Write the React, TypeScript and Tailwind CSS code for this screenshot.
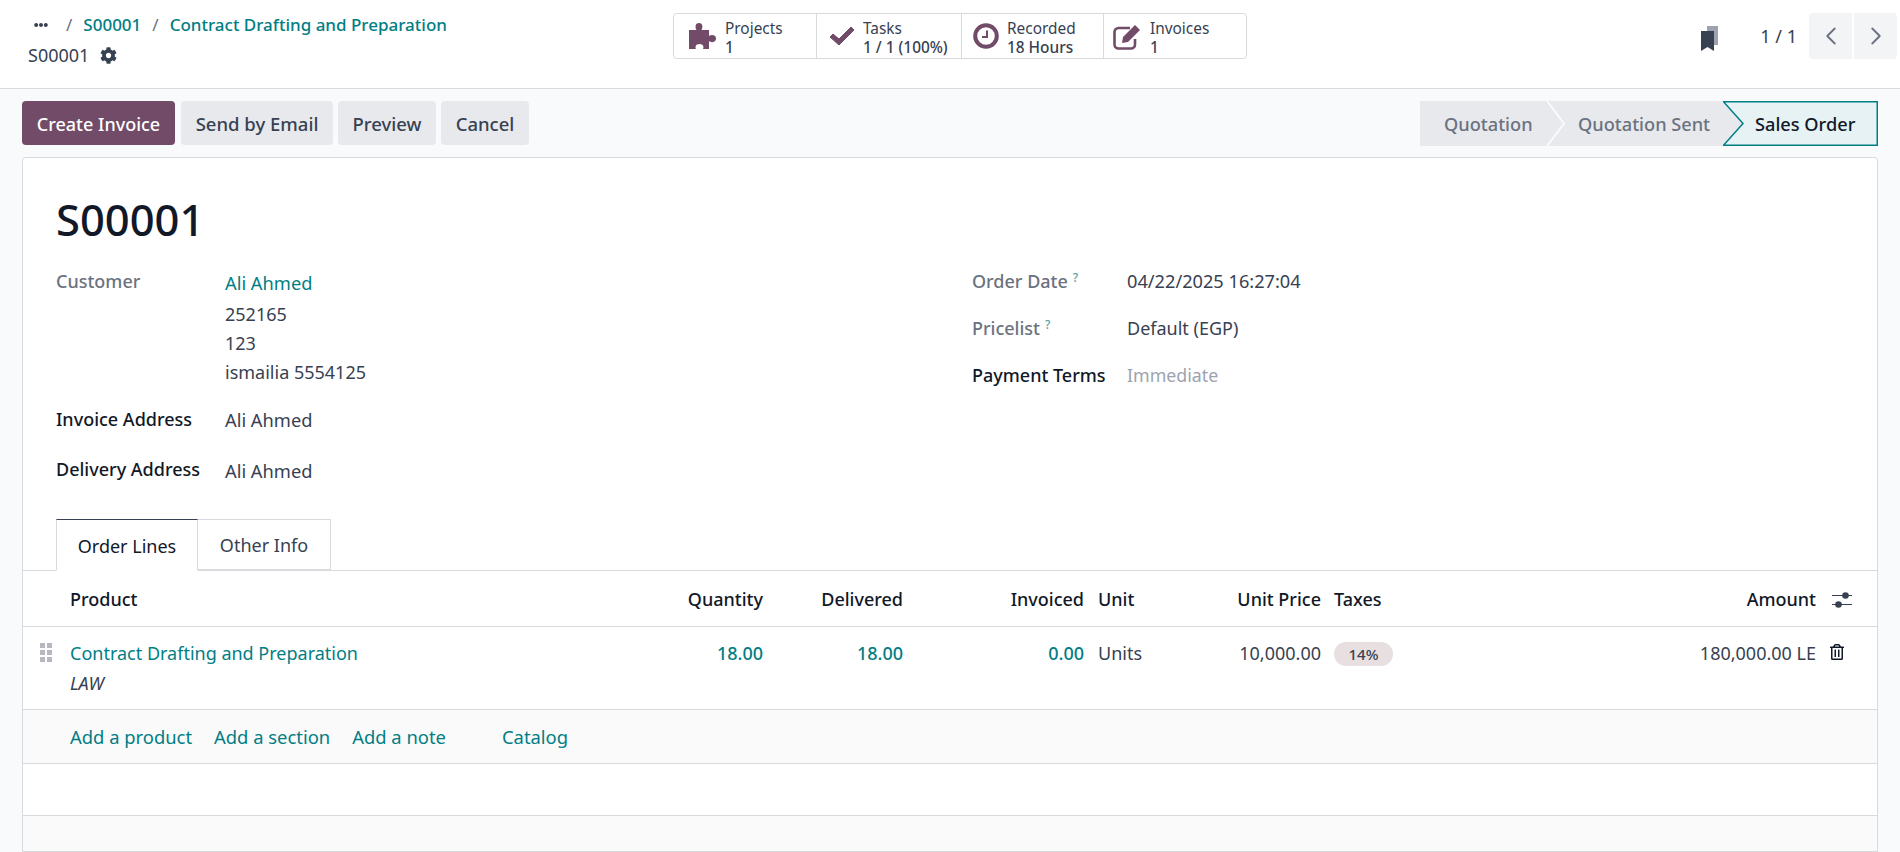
import { FaCog, FaEllipsisH, FaRegTrashAlt } from "react-icons/fa";
import { LuChevronLeft, LuChevronRight } from "react-icons/lu";
import type { ReactNode } from "react";

function StatButton({ icon, label, value, className, iconClass }: { icon: ReactNode; label: string; value: string; className: string; iconClass: string }) {
  return (
    <div className={`flex items-center h-full ${className}`}>
      <div className={`shrink-0 flex text-[#714b67] ${iconClass}`}>{icon}</div>
      <div className="flex flex-col pt-[4px] text-[15.4px] leading-[19px] text-[#374151]">
        <span>{label}</span>
        <span className="font-medium">{value}</span>
      </div>
    </div>
  );
}

function Field({ label, strong, help, children, className }: { label: string; strong?: boolean; help?: boolean; children: ReactNode; className?: string }) {
  return (
    <div className={`flex ${className ?? ""}`}>
      <div className={`w-[169px] shrink-0 font-medium ${strong ? "text-[#111827]" : "text-[#6b7280]"}`}>
        {label}
        {help && <sup className="ml-[5px] text-[12px] text-[#017e84] opacity-70">?</sup>}
      </div>
      <div className="text-[#374151]">{children}</div>
    </div>
  );
}

const grid = "grid grid-cols-[47px_500px_193px_140px_181px_150px_87px_200px_295px_1fr]";

export default function App() {
  return (
    <div className="h-[852px] w-[1900px] overflow-hidden flex flex-col bg-[#f9fafb] text-[18px] text-[#374151] font-['Noto_Sans','Open_Sans',sans-serif]">
      {/* control panel */}
      <header className="relative h-[89px] shrink-0 bg-white border-b border-[#d8dadd] flex justify-between">
        <div className="pl-[28px] pt-[12px]">
          <div className="flex items-center h-[26px] text-[17px] font-medium text-[#017e84]">
            <FaEllipsisH className="ml-[6px] text-[14px] text-[#374151]" />
            <span className="ml-[18px] mr-[11px] text-[#6b7280] font-normal">/</span>
            <span>S00001</span>
            <span className="mx-[11px] text-[#6b7280] font-normal">/</span>
            <span>Contract Drafting and Preparation</span>
          </div>
          <div className="flex items-center h-[34px] text-[#374151]">
            <span>S00001</span>
            <FaCog className="ml-[11px] text-[17px]" />
          </div>
        </div>
        <div className="absolute left-[673px] top-[13px] h-[46px] w-[574px] flex rounded-[4px] border border-[#d8dadd] divide-x divide-[#d8dadd]">
          <StatButton
            className="w-[143px]"
            iconClass="w-[51px] pl-[15px]"
            label="Projects"
            value="1"
            icon={
              <svg width="28" height="26" viewBox="0 0 28 26" fill="currentColor">
                <path d="M0 7h7.500C6 4.500 6 0 10 0s4 4.500 2.500 7H20v6c2-1.500 7-1.500 7 2.500S22 20 20 18v8h-6c1-2 .5-5-3.500-5S6 24 7 26H0z" />
              </svg>
            }
          />
          <StatButton
            className="w-[145px]"
            iconClass="w-[46px] pl-[12px]"
            label="Tasks"
            value="1 / 1 (100%)"
            icon={
              <svg width="26" height="20" viewBox="0 0 26 20" fill="currentColor" stroke="currentColor" strokeLinejoin="round">
                <path d="M1 11l3-3 6 5L22 1l3 3-15 15z" />
              </svg>
            }
          />
          <StatButton
            className="w-[142px]"
            iconClass="w-[45px] pl-[11px]"
            label="Recorded"
            value="18 Hours"
            icon={
              <svg width="26" height="26" viewBox="0 0 26 26" fill="none" stroke="currentColor">
                <circle cx="13" cy="13" r="10.800" strokeWidth="4" />
                <path d="M14 7.500v6.500H9" strokeWidth="2" />
              </svg>
            }
          />
          <StatButton
            className="flex-1"
            iconClass="w-[46px] pl-[9px]"
            label="Invoices"
            value="1"
            icon={
              <svg width="29" height="27" viewBox="0 0 29 27">
                <path d="M22 16v5.500a4 4 0 0 1-4 4H5.500a4 4 0 0 1-4-4V9a4 4 0 0 1 4-4H17" fill="none" stroke="currentColor" strokeWidth="2.600" />
                <path d="M9 20l1-6L22 2l5 5-12 12z" fill="currentColor" />
              </svg>
            }
          />
        </div>
        <div className="flex items-start pt-[13px] pr-[3px]">
          <svg width="18" height="26" viewBox="0 0 18 26" className="mt-[13px]">
            <path d="M6 0h11v19h-11z" fill="#9ca3af" />
            <path d="M0 5h13v20l-6.500-4-6.500 4z" fill="#374151" />
          </svg>
          <span className="ml-[41px] mr-[12px] h-[46px] flex items-center">1 / 1</span>
          <div className="flex gap-[2px]">
            <div className="w-[43px] h-[46px] rounded-l-[4px] bg-[#f3f4f6] flex items-center justify-center">
              <LuChevronLeft className="text-[30px] text-[#6b7280]" strokeWidth={1.5} />
            </div>
            <div className="w-[43px] h-[46px] rounded-r-[4px] bg-[#f3f4f6] flex items-center justify-center">
              <LuChevronRight className="text-[30px] text-[#6b7280]" strokeWidth={1.5} />
            </div>
          </div>
        </div>
      </header>

      {/* action bar */}
      <div className="h-[68px] shrink-0 flex items-start justify-between pl-[22px] pr-[22px] pt-[12px] font-medium">
        <div className="flex gap-[5px] h-[44px]">
          <button className="w-[153px] pt-[2px] rounded-[4px] bg-[#714b67] text-white">Create Invoice</button>
          <button className="ml-[1px] w-[152px] pt-[2px] rounded-[4px] bg-[#e7e9ed] text-[18.500px]">Send by Email</button>
          <button className="w-[98px] pt-[2px] rounded-[4px] bg-[#e7e9ed] text-[18.500px]">Preview</button>
          <button className="w-[88px] pt-[2px] rounded-[4px] bg-[#e7e9ed] text-[18.500px]">Cancel</button>
        </div>
        <div className="flex h-[45px] text-[18.200px]">
          <div className="relative w-[128px] pt-[2px] bg-[#e7e9ed] text-[#6b7280] flex items-center pl-[24px]">
            Quotation
            <svg width="20" height="45" viewBox="0 0 20 45" className="absolute -right-[18px] top-0 z-10">
              <path d="M1 0l17 22.500L1 45" fill="none" stroke="#f9fafb" strokeWidth="2" />
            </svg>
          </div>
          <div className="w-[175px] pt-[2px] bg-[#e7e9ed] text-[#6b7280] flex items-center pl-[30px]">Quotation Sent</div>
          <div className="relative w-[155px] pt-[2px] bg-[#e7e9ed] flex items-center pl-[32px] text-[#111827]">
            <svg width="155" height="45" viewBox="0 0 155 45" className="absolute inset-0">
              <path d="M0.500 0.750H154.250V44.250H0.500L20 22.500Z" fill="#e6f2f3" stroke="#017e84" strokeWidth="1.500" />
            </svg>
            <span className="relative">Sales Order</span>
          </div>
        </div>
      </div>

      {/* sheet */}
      <main className="mx-[22px] flex-1 bg-white border border-[#d8dadd] rounded-t-[4px] flex flex-col">
        <div className="pl-[33px] pt-[31px] h-[361px] shrink-0">
          <h1 className="text-[43.500px] leading-[60px] font-medium text-[#111827]">S00001</h1>
          <div className="flex mt-[20px]">
            <div className="w-[916px]">
              <Field label="Customer" className="leading-[24px]">
                <div className="text-[#017e84] text-[18.300px] leading-[26px] mt-[1px]">Ali Ahmed</div>
                <div className="leading-[29px] mt-[4px]">252165</div>
                <div className="leading-[29px]">123</div>
                <div className="leading-[29px]">ismailia 5554125</div>
              </Field>
              <Field label="Invoice Address" strong className="leading-[24px] mt-[20px]">
                <div className="mt-[1px] text-[18.300px]">Ali Ahmed</div>
              </Field>
              <Field label="Delivery Address" strong className="leading-[24px] mt-[25px]">
                <div className="mt-[2px] text-[18.300px]">Ali Ahmed</div>
              </Field>
            </div>
            <div className="flex flex-col gap-[23px] leading-[24px]">
              <Field label="Order Date" help className="w-[500px] [&>div:first-child]:w-[155px]">
                <span className="text-[18.200px]">04/22/2025 16:27:04</span>
              </Field>
              <Field label="Pricelist" help className="w-[500px] [&>div:first-child]:w-[155px]">Default (EGP)</Field>
              <Field label="Payment Terms" strong className="w-[500px] [&>div:first-child]:w-[155px]">
                <span className="text-[#9ca3af] text-[17.800px]">Immediate</span>
              </Field>
            </div>
          </div>
        </div>

        {/* tabs */}
        <div className="flex pl-[33px] h-[52px] shrink-0 border-b border-[#d8dadd] relative">
          <div className="w-[142px] h-[52px] pt-[2px] bg-white border border-[#d8dadd] border-t-[#374151] border-b-white text-[#111827] flex items-center justify-center">Order Lines</div>
          <div className="w-[133px] h-[51px] pt-[2px] border border-l-0 border-[#d8dadd] flex items-center justify-center">Other Info</div>
        </div>

        {/* order lines */}
        <div className={`${grid} h-[56px] shrink-0 items-center pt-[2px] border-b border-[#d8dadd] font-medium text-[#111827]`}>
          <div />
          <div>Product</div>
          <div className="text-right">Quantity</div>
          <div className="text-right">Delivered</div>
          <div className="text-right">Invoiced</div>
          <div className="pl-[14px]">Unit</div>
          <div className="text-right">Unit Price</div>
          <div className="pl-[13px]">Taxes</div>
          <div className="text-right">Amount</div>
          <div className="pl-[16px]">
            <svg width="20" height="16" viewBox="0 0 20 16" className="text-[#374151]">
              <path d="M0 3.500h20M0 12.500h20" stroke="currentColor" strokeWidth="1.200" />
              <circle cx="13.500" cy="3.500" r="3.300" fill="currentColor" />
              <circle cx="6.500" cy="12.500" r="3.300" fill="currentColor" />
            </svg>
          </div>
        </div>
        <div className={`${grid} h-[83px] shrink-0 border-b border-[#d8dadd] pt-[13px]`}>
          <div className="pl-[17px] pt-[2px]">
            <div className="grid grid-cols-2 w-[12px] gap-y-[2px] gap-x-[2px] mt-[1px]">
              {[0, 1, 2, 3, 4, 5].map((i) => (
                <span key={i} className="w-[5px] h-[5px] bg-[#b5b8be]" />
              ))}
            </div>
          </div>
          <div>
            <div className="text-[#017e84] leading-[26px]">Contract Drafting and Preparation</div>
            <div className="italic leading-[26px] mt-[4px]">LAW</div>
          </div>
          <div className="text-right font-medium text-[#017e84] leading-[26px]">18.00</div>
          <div className="text-right font-medium text-[#017e84] leading-[26px]">18.00</div>
          <div className="text-right font-medium text-[#017e84] leading-[26px]">0.00</div>
          <div className="pl-[14px] leading-[26px]">Units</div>
          <div className="text-right leading-[26px]">10,000.00</div>
          <div className="pl-[13px]">
            <span className="inline-flex items-center justify-center w-[59px] h-[24px] rounded-full bg-[#e7dfe0] text-[15px] font-medium text-[#374151]">14%</span>
          </div>
          <div className="text-right leading-[26px]">180,000.00 LE</div>
          <div className="pl-[13px] pt-[4px] text-[#111827]">
            <FaRegTrashAlt className="text-[16px]" />
          </div>
        </div>
        <div className="h-[54px] shrink-0 border-b border-[#d8dadd] bg-[#fafafa] flex items-center pl-[47px] text-[18.400px] text-[#017e84]">
          <span>Add a product</span>
          <span className="ml-[22px]">Add a section</span>
          <span className="ml-[22px]">Add a note</span>
          <span className="ml-[56px]">Catalog</span>
        </div>
        <div className="h-[52px] shrink-0 border-b border-[#d8dadd] bg-white" />
        <div className="flex-1 bg-[#fafafa]" />
      </main>
    </div>
  );
}
